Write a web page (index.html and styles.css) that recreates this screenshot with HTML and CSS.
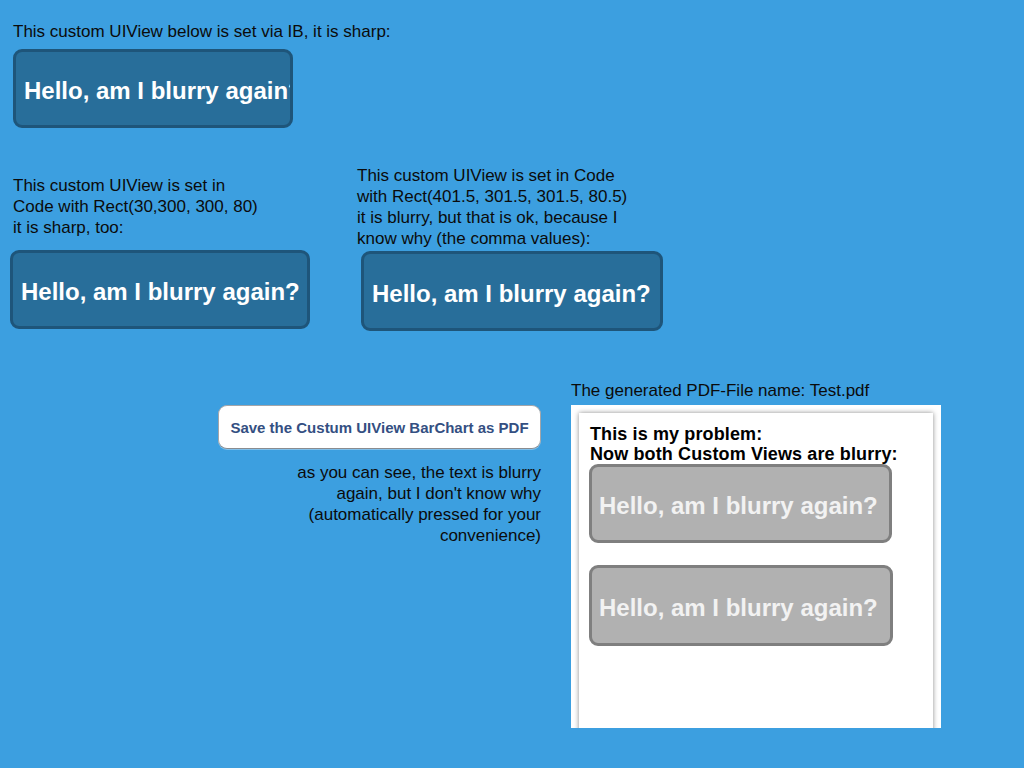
FILE: index.html
```html
<!DOCTYPE html>
<html>
<head>
<meta charset="utf-8">
<link rel="stylesheet" href="styles.css">
</head>
<body>
<div class="screen">
  <section class="intro">
    <p class="label">This custom UIView below is set via IB, it is sharp:</p>
    <div class="view view-ib"><span>Hello, am I blurry again?</span></div>
  </section>

  <section class="row-views">
    <div class="col col-code">
      <p class="label">This custom UIView is set in<br>Code with Rect(30,300, 300, 80)<br>it is sharp, too:</p>
      <div class="view view-code"><span>Hello, am I blurry again?</span></div>
    </div>
    <div class="col col-blurry">
      <p class="label">This custom UIView is set in Code<br>with Rect(401.5, 301.5, 301.5, 80.5)<br>it is blurry, but that is ok, because I<br>know why (the comma values):</p>
      <div class="view view-half"><span>Hello, am I blurry again?</span></div>
    </div>
  </section>

  <section class="row-pdf">
    <div class="col col-action">
      <button class="save-btn" type="button">Save the Custum UIView BarChart as PDF</button>
      <p class="note">as you can see, the text is blurry<br>again, but I don't know why<br>(automatically pressed for your<br>convenience)</p>
    </div>
    <div class="col col-preview">
      <p class="label">The generated PDF-File name: Test.pdf</p>
      <div class="pdf-frame">
        <div class="pdf-page">
          <p class="pdf-title">This is my problem:<br>Now both Custom Views are blurry:</p>
          <div class="view grey grey-1"><span>Hello, am I blurry again?</span></div>
          <div class="view grey grey-2"><span>Hello, am I blurry again?</span></div>
        </div>
      </div>
    </div>
  </section>
</div>
</body>
</html>
```

FILE: styles.css
```css
html, body {
  margin: 0;
  padding: 0;
}

body {
  background: #3c9fe0;
  font-family: "Liberation Sans", Arial, sans-serif;
  font-size: 17px;
  line-height: 21px;
  color: #0b0b0b;
}

.screen {
  width: 1024px;
  height: 768px;
  overflow: hidden;
}

p {
  margin: 0;
}

.intro {
  padding: 21px 0 0 13px;
}

.intro .label {
  margin-bottom: 7px;
}

/* custom views */
.view {
  box-sizing: border-box;
  border: 3px solid #1e557a;
  border-radius: 9px;
  background: #286e9a;
  color: #ffffff;
  font-weight: bold;
  font-size: 24px;
  line-height: 28px;
  display: flex;
  align-items: center;
  white-space: nowrap;
  overflow: hidden;
  padding-left: 8px;
}

.view span {
  display: block;
  margin-top: 5px;
}

.view-ib {
  width: 280px;
  height: 79px;
}

.view-code {
  width: 300px;
  height: 79px;
}

.view-half {
  width: 302px;
  height: 80px;
}

/* second row */
.row-views {
  display: flex;
  margin-top: 37px;
}

.col-code {
  width: 357px;
  padding: 10px 0 0 10px;
  box-sizing: border-box;
}

.col-code .label {
  padding-left: 3px;
  margin-bottom: 12px;
}

.col-blurry .label {
  margin-bottom: 2px;
}

.col-blurry .view {
  margin-left: 4px;
}

/* third row */
.row-pdf {
  display: flex;
  margin-top: 49px;
}

.col-action {
  width: 541px;
  padding-top: 25px;
  display: flex;
  flex-direction: column;
  align-items: flex-end;
}

.save-btn {
  width: 323px;
  height: 44px;
  box-sizing: border-box;
  background: #ffffff;
  border: 1px solid #a3a5a9;
  border-bottom-color: #8a8c90;
  border-radius: 9px;
  box-shadow: 0 1px 0 rgba(255, 255, 255, 0.35);
  color: #344f82;
  font-family: "Liberation Sans", Arial, sans-serif;
  font-weight: bold;
  font-size: 15px;
  padding: 0;
}

.note {
  margin-top: 13px;
  text-align: right;
}

.col-preview {
  margin-left: 30px;
}

.pdf-frame {
  margin-top: 4px;
  width: 370px;
  height: 323px;
  background: #ffffff;
  padding: 8px 8px 0 8px;
  box-sizing: border-box;
  overflow: hidden;
}

.pdf-page {
  height: 340px;
  background: #ffffff;
  box-shadow: 0 0 5px rgba(0, 0, 0, 0.45);
  padding: 11px 0 0 10px;
  box-sizing: border-box;
}

.pdf-title {
  font-weight: bold;
  font-size: 18px;
  line-height: 20px;
  letter-spacing: 0.12px;
  color: #000000;
  padding-left: 1px;
}

.grey {
  background: #b1b1b1;
  border-color: #7f7f7f;
  color: #f2f2f2;
  padding-left: 7px;
}

.grey-1 {
  width: 303px;
  height: 79px;
}

.grey-2 {
  width: 304px;
  height: 81px;
  margin-top: 22px;
}
```
